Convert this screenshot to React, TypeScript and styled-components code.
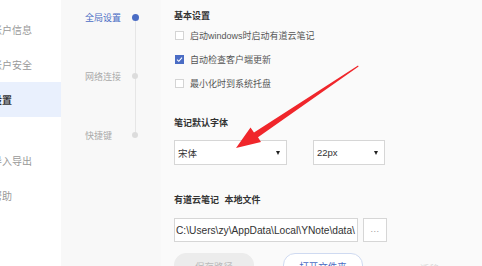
import styled, { createGlobalStyle } from "styled-components";

const GlobalStyle = createGlobalStyle`
  html, body {
    margin: 0;
    padding: 0;
    width: 482px;
    height: 266px;
    overflow: hidden;
    background: #fafafa;
  }
  * {
    box-sizing: border-box;
  }
`;

const cjk = `"Liberation Sans", "Noto Sans CJK SC", sans-serif`;

const StyledPage = styled.div`
  position: relative;
  display: flex;
  width: 482px;
  height: 266px;
  overflow: hidden;
  font-family: ${cjk};
`;

const StyledSidebar = styled.aside`
  width: 61px;
  flex-shrink: 0;
  background: #fff;
  padding-top: 12px;
  overflow: hidden;
`;

const StyledSideItem = styled.div<{ $active?: boolean; $gap?: boolean }>`
  height: 35px;
  display: flex;
  align-items: center;
  margin-top: ${(p) => (p.$gap ? "26px" : "0")};
  background: ${(p) => (p.$active ? "#e9f0fd" : "transparent")};
  span {
    margin-left: -8px;
    font-size: 10px;
    white-space: nowrap;
    color: ${(p) => (p.$active ? "#333" : "#999")};
    font-weight: ${(p) => (p.$active ? 700 : 400)};
  }
`;

const StyledNav = styled.nav`
  width: 100px;
  flex-shrink: 0;
  background: #f8f8f8;
  padding-top: 11px;
`;

const StyledTrack = styled.div`
  position: relative;
  &::before {
    content: "";
    position: absolute;
    left: 73.5px;
    top: 6px;
    height: 118px;
    width: 1px;
    background: #e6e6e6;
  }
`;

const StyledNavItem = styled.div<{ $active?: boolean }>`
  position: relative;
  display: flex;
  align-items: center;
  height: 12px;
  margin-bottom: 47px;
  font-size: 9px;
  color: ${(p) => (p.$active ? "#4a6cc4" : "#aaa")};
  span {
    width: 74px;
    padding-left: 24px;
    white-space: nowrap;
  }
`;

const StyledDot = styled.i<{ $active?: boolean }>`
  display: block;
  width: ${(p) => (p.$active ? "7px" : "6px")};
  height: ${(p) => (p.$active ? "7px" : "6px")};
  margin-left: ${(p) => (p.$active ? "-3.5px" : "-3px")};
  border-radius: 50%;
  background: ${(p) => (p.$active ? "#4a6cc4" : "#dcdcdc")};
`;

const StyledMain = styled.main`
  flex: 1;
  padding: 10px 0 0 13px;
  background: #fafafa;
`;

const StyledTitle = styled.div<{ $top?: number }>`
  font-size: 9px;
  line-height: 12px;
  font-weight: 700;
  color: #333;
  margin-top: ${(p) => p.$top ?? 0}px;
  white-space: nowrap;
  word-spacing: 3px;
`;

const StyledCheckRow = styled.label`
  display: flex;
  align-items: center;
  height: 24px;
  font-size: 9px;
  color: #555;
  white-space: nowrap;
  &:first-of-type {
    margin-top: 1.5px;
  }
`;

const StyledBox = styled.span<{ $checked?: boolean }>`
  width: 9px;
  height: 9px;
  margin: 0 6px 0 1px;
  border: 1px solid ${(p) => (p.$checked ? "#4a6cc4" : "#d4d4d4")};
  background: ${(p) => (p.$checked ? "#4a6cc4" : "#fff")};
  display: flex;
  align-items: center;
  justify-content: center;
`;

const StyledRow = styled.div<{ $top: number; $gap: number }>`
  display: flex;
  margin-top: ${(p) => p.$top}px;
  gap: ${(p) => p.$gap}px;
  align-items: center;
`;

const StyledSelect = styled.div<{ $width: number }>`
  width: ${(p) => p.$width}px;
  height: 25px;
  border: 1px solid #d6d6d6;
  background: #fff;
  display: flex;
  align-items: center;
  justify-content: space-between;
  padding: 0 6px 0 3px;
  font-size: 9.5px;
  color: #333;
  &::after {
    content: "";
    border-left: 2px solid transparent;
    border-right: 2px solid transparent;
    border-top: 4px solid #222;
  }
`;

const StyledPath = styled.div`
  width: 184px;
  height: 24px;
  border: 1px solid #d6d6d6;
  background: #fff;
  display: flex;
  align-items: center;
  padding-left: 1px;
  font-family: "Liberation Sans", sans-serif;
  font-size: 10.2px;
  color: #333;
  white-space: nowrap;
  overflow: hidden;
`;

const StyledDots = styled.div`
  width: 24px;
  height: 24px;
  border: 1px solid #d6d6d6;
  background: #fff;
  display: flex;
  align-items: center;
  justify-content: center;
  font-size: 9px;
  color: #999;
  letter-spacing: 0.5px;
  padding-bottom: 3px;
`;

const StyledButton = styled.div<{ $primary?: boolean }>`
  width: 80px;
  height: 26px;
  border-radius: 12px;
  display: flex;
  align-items: center;
  justify-content: center;
  font-size: 9.5px;
  background: ${(p) => (p.$primary ? "#fff" : "#ececec")};
  border: 1px solid ${(p) => (p.$primary ? "#cfdaf1" : "#ececec")};
  color: ${(p) => (p.$primary ? "#4a6cc4" : "#bbb")};
`;

const StyledFaint = styled.span`
  margin-left: 28px;
  font-size: 9.5px;
  color: #d8d8d8;
  align-self: flex-start;
  padding-top: 8px;
`;

const StyledArrow = styled.svg`
  position: absolute;
  left: 0;
  top: 0;
  width: 482px;
  height: 266px;
  pointer-events: none;
`;

export default function App() {
  return (
    <>
      <GlobalStyle />
      <StyledPage>
        <StyledSidebar>
          <StyledSideItem><span>账户信息</span></StyledSideItem>
          <StyledSideItem><span>账户安全</span></StyledSideItem>
          <StyledSideItem $active><span>设置</span></StyledSideItem>
          <StyledSideItem $gap><span>导入导出</span></StyledSideItem>
          <StyledSideItem><span>帮助</span></StyledSideItem>
        </StyledSidebar>

        <StyledNav>
          <StyledTrack>
            <StyledNavItem $active>
              <span>全局设置</span>
              <StyledDot $active />
            </StyledNavItem>
            <StyledNavItem>
              <span>网络连接</span>
              <StyledDot />
            </StyledNavItem>
            <StyledNavItem>
              <span>快捷键</span>
              <StyledDot />
            </StyledNavItem>
          </StyledTrack>
        </StyledNav>

        <StyledMain>
          <StyledTitle>基本设置</StyledTitle>
          <StyledCheckRow>
            <StyledBox />
            启动windows时启动有道云笔记
          </StyledCheckRow>
          <StyledCheckRow>
            <StyledBox $checked>
              <svg width="7" height="7" viewBox="0 0 7 7">
                <path d="M1 3.6 L2.8 5.3 L6 1.6" fill="none" stroke="#fff" strokeWidth="1.1" />
              </svg>
            </StyledBox>
            自动检查客户端更新
          </StyledCheckRow>
          <StyledCheckRow>
            <StyledBox />
            最小化时到系统托盘
          </StyledCheckRow>

          <StyledTitle $top={21.5}>笔记默认字体</StyledTitle>
          <StyledRow $top={11} $gap={26}>
            <StyledSelect $width={113}>宋体</StyledSelect>
            <StyledSelect $width={72}>22px</StyledSelect>
          </StyledRow>

          <StyledTitle $top={29}>有道云笔记 本地文件</StyledTitle>
          <StyledRow $top={12} $gap={5}>
            <StyledPath>C:\Users\zy\AppData\Local\YNote\data\</StyledPath>
            <StyledDots>...</StyledDots>
          </StyledRow>

          <StyledRow $top={11} $gap={29}>
            <StyledButton>保存路径</StyledButton>
            <StyledButton $primary>打开文件夹</StyledButton>
            <StyledFaint>迁移</StyledFaint>
          </StyledRow>
        </StyledMain>

        <StyledArrow viewBox="0 0 482 266">
          <polygon
            points="358,65.6 358.6,66.4 258,137.2 261,142 236,148 250.5,127.5 254,132.6"
            fill="#f0262b"
          />
        </StyledArrow>
      </StyledPage>
    </>
  );
}
